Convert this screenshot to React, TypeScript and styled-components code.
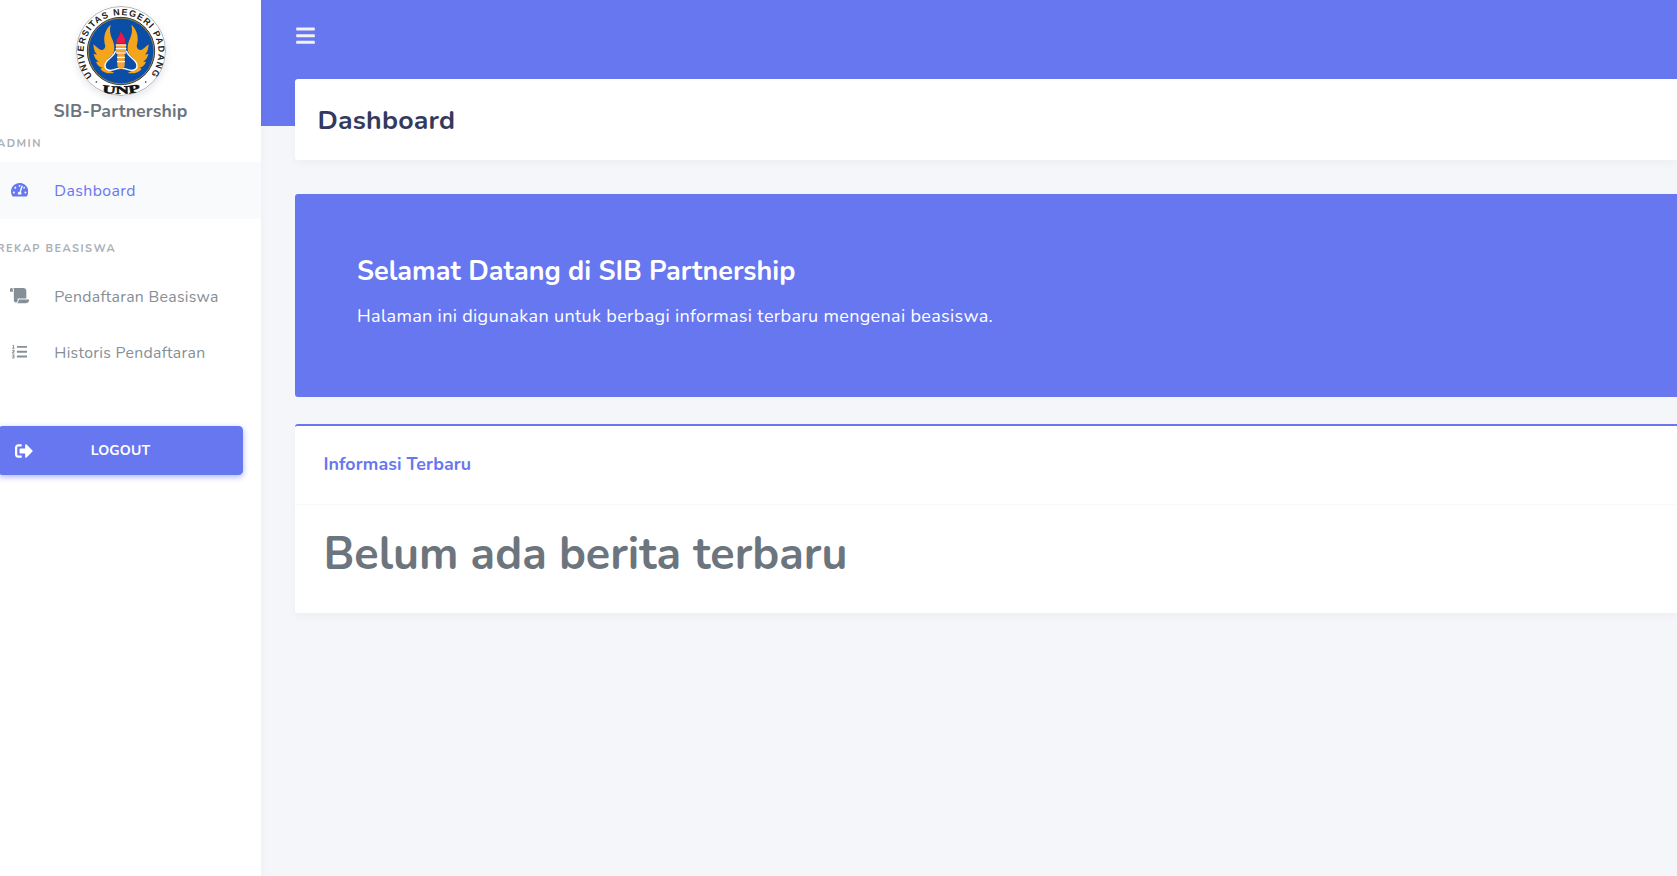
import React from "react";
import styled, { createGlobalStyle } from "styled-components";
import { FaBars, FaTachometerAlt, FaScroll, FaListOl, FaSignOutAlt } from "react-icons/fa";

const Global = createGlobalStyle`
  * { box-sizing: border-box; }
  body { margin: 0; background: #f4f6f9; font-family: Nunito, Lato, "Open Sans", sans-serif; }
  h1, h2, h3, h4, p { margin: 0; }
`;

const Page = styled.div`
  display: flex;
  height: 876px;
  overflow: hidden;
`;

const Sidebar = styled.aside`
  flex: 0 0 261px;
  overflow: hidden;
  background: #fff;
  color: #868e96;
  box-shadow: 0 4px 9px rgba(0, 0, 0, 0.03);
  z-index: 1;
`;

const Brand = styled.div`
  display: flex;
  flex-direction: column;
  align-items: center;
  width: 241px;
  height: 133px;
  padding-top: 6px;
`;

const Logo = styled.svg`
  display: block;
  width: 90px;
  height: 90px;
  border-radius: 50%;
  box-shadow: 0 3px 7px rgba(60, 70, 110, 0.14);
`;

const BrandName = styled.a`
  margin-top: 3px;
  font-size: 17.7px;
  line-height: 24px;
  font-weight: 700;
  letter-spacing: 0.13px;
  color: #6c757d;
`;

const MenuHeader = styled.div<{ $spaced?: boolean }>`
  height: ${p => (p.$spaced ? 31 : 29)}px;
  margin: ${p => (p.$spaced ? 19 : 0)}px 0 0 -3px;
  line-height: 22px;
  font-size: 11px;
  font-weight: 700;
  letter-spacing: 1.5px;
  color: #a9b0b6;
  text-transform: uppercase;
  white-space: nowrap;
`;

const MenuItem = styled.a<{ $active?: boolean }>`
  display: flex;
  align-items: center;
  height: ${p => (p.$active ? 57 : 56)}px;
  padding-left: 10px;
  font-size: 15.8px;
  letter-spacing: ${p => (p.$active ? 0.42 : 0.32)}px;
  white-space: nowrap;
  color: ${p => (p.$active ? "#6777ef" : "#868e96")};
  background: ${p => (p.$active ? "#f8fafb" : "transparent")};
`;

const ItemIcon = styled.span<{ $width: number }>`
  display: flex;
  justify-content: center;
  width: 19px;
  margin: 0 25.3px 2px 0;

  svg {
    flex: none;
    width: ${p => p.$width}px;
    height: 15.4px;
  }
`;

const Logout = styled.button`
  display: flex;
  align-items: center;
  width: 245px;
  height: 49px;
  margin: 45px 0 0 -2px;
  padding: 0 0 0 17px;
  border: 0;
  border-radius: 4.4px;
  background: #6777ef;
  color: #fff;
  box-shadow: 0 2px 6px #acb5f6;
  font: 700 14px Nunito, Lato, sans-serif;
  letter-spacing: 0.15px;
`;

const LogoutLabel = styled.span`
  margin-left: 57.7px;
`;

const Main = styled.main`
  flex: 1;
  min-width: 0;
  padding-left: 34px;
  background: linear-gradient(#6777ef 126px, #f4f6f9 126px);
`;

const Navbar = styled.nav`
  display: flex;
  height: 79px;
  padding: 25px 0 0 0.8px;
  color: #f2f2f2;

  svg {
    width: 19px;
    height: 21.3px;
  }
`;

const Header = styled.header`
  display: flex;
  align-items: center;
  height: 81px;
  padding-left: 22.5px;
  border-radius: 3px 0 0 3px;
  background: #fff;
  box-shadow: 0 4px 9px rgba(0, 0, 0, 0.03);
`;

const Title = styled.h1`
  font-size: 26.7px;
  font-weight: 700;
  letter-spacing: 0.22px;
  color: #34395e;
`;

const Hero = styled.section`
  height: 203px;
  margin-top: 34px;
  padding: 61px 0 0 62px;
  border-radius: 3px 0 0 3px;
  background: #6777ef;
  color: #fff;
`;

const HeroTitle = styled.h2`
  font-size: 27px;
  line-height: 34px;
  font-weight: 700;
`;

const HeroText = styled.p`
  margin-top: 13px;
  font-size: 18px;
  line-height: 28px;
  font-weight: 450;
  letter-spacing: 0.337px;
`;

const Card = styled.section`
  height: 189px;
  margin-top: 27px;
  border-top: 2px solid #6777ef;
  border-radius: 3px 0 0 3px;
  background: #fff;
  box-shadow: 0 4px 9px rgba(0, 0, 0, 0.03);
`;

const CardHeader = styled.div`
  display: flex;
  align-items: center;
  height: 79px;
  padding: 0 0 2px 28.4px;
  border-bottom: 1px solid #f9f9f9;
`;

const CardTitle = styled.h4`
  font-size: 17.8px;
  font-weight: 700;
  letter-spacing: 0.1px;
  color: #6777ef;
`;

const Empty = styled.h3`
  padding: 22px 0 0 28.4px;
  font-size: 44.95px;
  line-height: 56px;
  font-weight: 700;
  color: #6c757d;
`;

function UniversityLogo() {
  const wing =
    "M152 74 C131 92 130 118 136 138 C134 150 125 154 116 146 L100 133 C101 149 105 158 111 164 L101 161 C104 175 110 181 117 185 L108 185 C112 196 120 202 128 203 L121 206 C130 219 146 222 163 219 L139 207 C132 189 142 176 158 164 C167 147 162 128 156 116 C150 102 148 90 152 74Z";
  return (
    <Logo viewBox="48 18 270 270">
      <defs>
        <path id="ring-top" d="M98 230 A112 112 0 1 1 268 230" />
        <path id="ring-bottom" d="M118 275 Q183 289 248 273" />
      </defs>
      <circle cx="183" cy="153" r="133.5" fill="#fff" stroke="#888" strokeWidth="2" />
      <circle cx="183" cy="153" r="101" fill="#0b4ea8" stroke="#33363c" strokeWidth="3" />
      <circle cx="183" cy="153" r="98.5" fill="none" stroke="#d9a321" strokeWidth="2" />
      <text fontFamily="Liberation Sans, sans-serif" fontWeight="700" fontSize="27" fill="#222">
        <textPath href="#ring-top" textLength="500" startOffset="2">UNIVERSITAS  NEGERI  PADANG</textPath>
      </text>
      <text fontFamily="Liberation Serif, serif" fontWeight="700" fontSize="34" fill="#111" stroke="#111" strokeWidth="1.5">
        <textPath href="#ring-bottom" startOffset="8" textLength="116" lengthAdjust="spacingAndGlyphs">UNP</textPath>
      </text>
      <circle cx="109" cy="246" r="2.5" fill="#222" />
      <circle cx="257" cy="246" r="2.5" fill="#222" />
      <path d={wing} fill="#f5a51b" />
      <path d={wing} fill="#f5a51b" transform="matrix(-1 0 0 1 366 0)" />
      <path
        d="M166 154 C162 172 135 178 135 197 C135 210 148 214 162 209 C174 204 192 204 204 209 C218 214 231 210 231 197 C231 178 204 172 200 154Z"
        fill="#0b4ea8"
        stroke="#fff"
        strokeWidth="4"
      />
      <path d="M168 133 h30 v24 l-4 5 v36 l-5 8 h-12 l-5 -8 v-36 l-4 -5Z" fill="#f2a33a" />
      <path d="M167 135 h32 M167 146 h32 M168 159 h30 M171 172 h24 M171 185 h24" stroke="#fff" strokeWidth="3.5" />
      <path d="M170 130 C166 116 180 111 181 95 C193 108 198 117 195 130Z" fill="#ed1746" />
    </Logo>
  );
}

export default function App() {
  return (
    <>
      <Global />
      <Page>
        <Sidebar>
          <Brand>
            <UniversityLogo />
            <BrandName>SIB-Partnership</BrandName>
          </Brand>
          <MenuHeader>Admin</MenuHeader>
          <MenuItem $active>
            <ItemIcon $width={17.3}><FaTachometerAlt /></ItemIcon>
            Dashboard
          </MenuItem>
          <MenuHeader $spaced>Rekap Beasiswa</MenuHeader>
          <MenuItem>
            <ItemIcon $width={19.2}><FaScroll /></ItemIcon>
            Pendaftaran Beasiswa
          </MenuItem>
          <MenuItem>
            <ItemIcon $width={15.4}><FaListOl /></ItemIcon>
            Historis Pendaftaran
          </MenuItem>
          <Logout>
            <FaSignOutAlt size={18} />
            <LogoutLabel>LOGOUT</LogoutLabel>
          </Logout>
        </Sidebar>
        <Main>
          <Navbar><FaBars /></Navbar>
          <Header><Title>Dashboard</Title></Header>
          <Hero>
            <HeroTitle>Selamat Datang di SIB Partnership</HeroTitle>
            <HeroText>Halaman ini digunakan untuk berbagi informasi terbaru mengenai beasiswa.</HeroText>
          </Hero>
          <Card>
            <CardHeader><CardTitle>Informasi Terbaru</CardTitle></CardHeader>
            <Empty>Belum ada berita terbaru</Empty>
          </Card>
        </Main>
      </Page>
    </>
  );
}
